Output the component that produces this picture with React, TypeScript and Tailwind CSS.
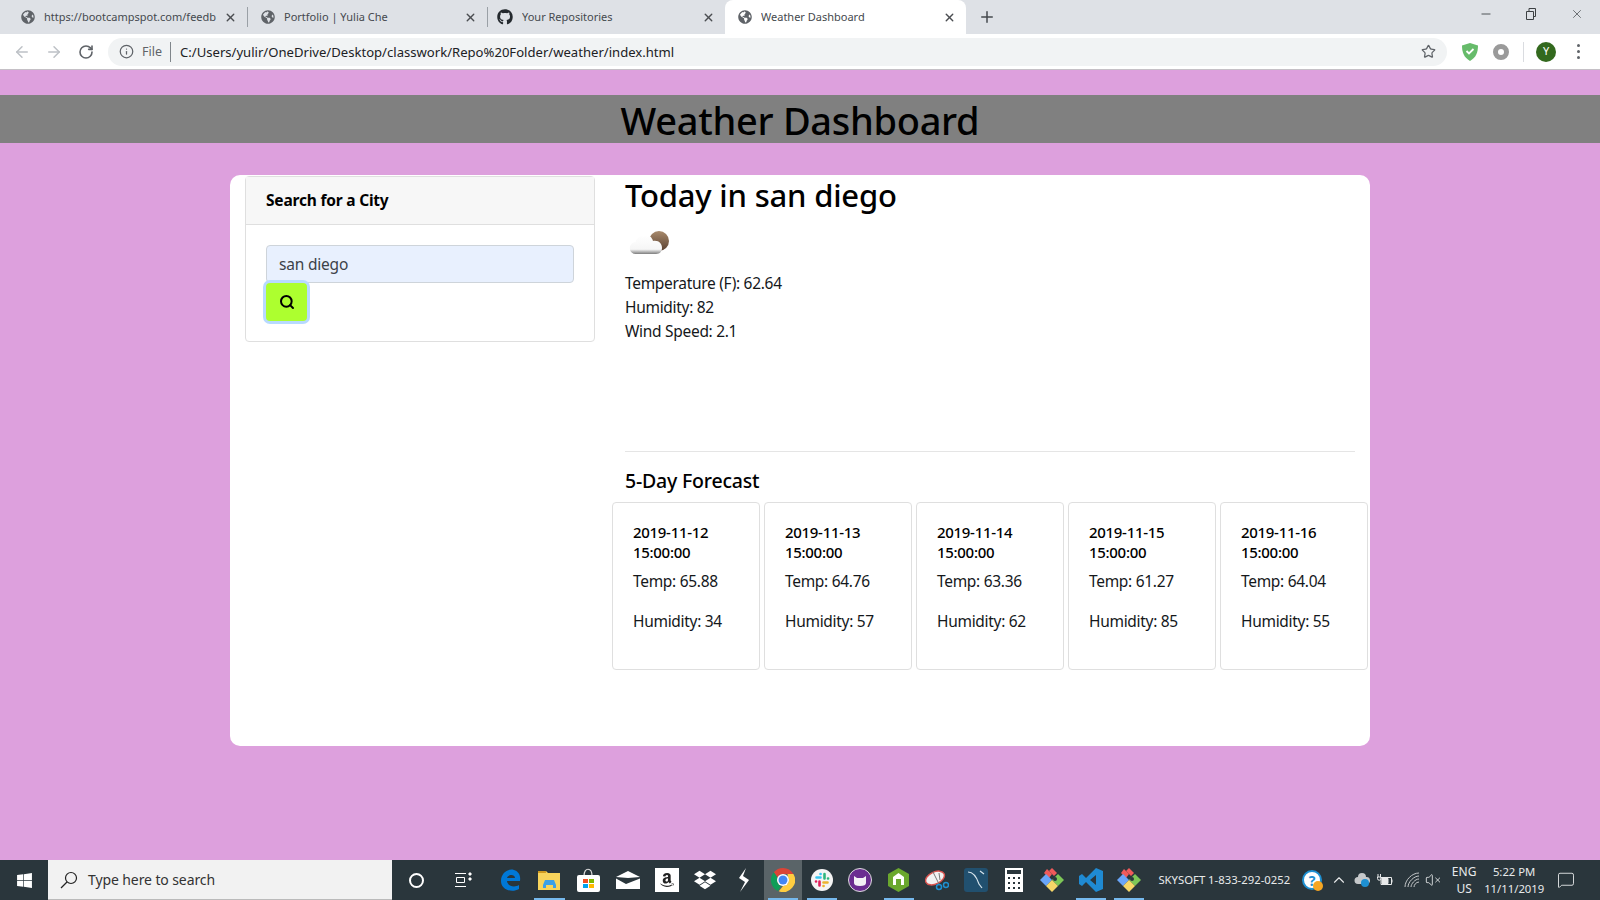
import type { ReactNode } from "react";
import { ArrowLeft, ArrowRight, ChevronUp, Info, MessageSquare, Minus, Plus, RotateCw, Search, Star, VolumeX, X } from "lucide-react";
import { FaAmazon, FaDropbox, FaGithub, FaGlobeAmericas, FaWindows } from "react-icons/fa";

const tabs = [
  { title: "https://bootcampspot.com/feedb", github: false, active: false, width: "w-[239px]", pad: "pl-[13px]" },
  { title: "Portfolio | Yulia Che", github: false, active: false, width: "w-[239px]", pad: "pl-[13px]" },
  { title: "Your Repositories", github: true, active: false, width: "w-[237px]", pad: "pl-[9px]" },
  { title: "Weather Dashboard", github: false, active: true, width: "w-[241px]", pad: "pl-[13px]" },
];

const forecast = [
  { date: "2019-11-12", temp: "65.88", humidity: "34" },
  { date: "2019-11-13", temp: "64.76", humidity: "57" },
  { date: "2019-11-14", temp: "63.36", humidity: "62" },
  { date: "2019-11-15", temp: "61.27", humidity: "85" },
  { date: "2019-11-16", temp: "64.04", humidity: "55" },
];

function Tab({ title, github, active, width, pad }: (typeof tabs)[number]) {
  return (
    <div className={`${width} ${pad} flex h-[34px] shrink-0 items-center pr-[10px] ${active ? "rounded-t-[8px] bg-white" : ""}`}>
      {github ? (
        <FaGithub className="h-[16px] w-[16px] shrink-0 text-[#24292e]" />
      ) : (
        <FaGlobeAmericas className="h-[14px] w-[14px] shrink-0 text-[#5f6368]" />
      )}
      <span className="ml-[9px] flex-1 overflow-hidden text-[11px] whitespace-nowrap text-[#45494e]">{title}</span>
      <X className="ml-[4px] h-[13px] w-[13px] shrink-0 text-[#4a4d51]" strokeWidth={2.5} />
    </div>
  );
}

function BrowserBar() {
  return (
    <div className="shrink-0">
      <div className="flex h-[34px] items-center bg-[#dee1e6] pl-[8px]">
        {tabs.map((tab, index) => (
          <div key={tab.title} className="flex items-center">
            <Tab {...tab} />
            {index < 2 && <div className="h-[20px] w-px bg-[#9aa0a6]" />}
          </div>
        ))}
        <Plus className="ml-[12px] h-[18px] w-[18px] text-[#45494e]" strokeWidth={2} />
        <div className="ml-auto flex items-center pb-[6px] text-[#3c4043]">
          <Minus className="mr-[31px] h-[14px] w-[14px]" strokeWidth={1.5} />
          <svg className="mr-[32px] h-[14px] w-[14px]" viewBox="0 0 14 14" fill="none" stroke="currentColor">
            <path d="M2.500 4.500h7v8h-7zM5 4.500v-3h6.500v8h-2.500" />
          </svg>
          <X className="mr-[16px] h-[14px] w-[14px]" strokeWidth={1.2} />
        </div>
      </div>
      <div className="flex h-[36px] items-center border-b border-[#c5c0c6] bg-white">
        <ArrowLeft className="ml-[13px] h-[18px] w-[18px] text-[#bdc1c6]" strokeWidth={2} />
        <ArrowRight className="ml-[14px] h-[18px] w-[18px] text-[#bdc1c6]" strokeWidth={2} />
        <RotateCw className="ml-[15px] h-[16px] w-[16px] text-[#5f6368]" strokeWidth={2.4} />
        <div className="ml-[14px] flex h-[28px] w-[1339px] items-center rounded-full bg-[#f1f3f4] pl-[11px]">
          <Info className="h-[15px] w-[15px] text-[#5f6368]" strokeWidth={2} />
          <span className="ml-[8px] pt-[2px] text-[12.500px] text-[#5f6368]">File</span>
          <div className="ml-[8px] h-[20px] w-px bg-[#80868b]" />
          <span className="ml-[9px] pt-[2px] text-[13.100px] text-[#202124]">C:/Users/yulir/OneDrive/Desktop/classwork/Repo%20Folder/weather/index.html</span>
          <Star className="mr-[11px] ml-auto h-[15px] w-[15px] text-[#5f6368]" strokeWidth={2} />
        </div>
        <svg className="ml-[14px] h-[20px] w-[18px]" viewBox="0 0 18 20">
          <path d="M9 1l8 2.500c0 7-2 12-8 15.500C3 15.500 1 10.500 1 3.500z" fill="#66bb6a" />
          <path d="M5.500 9l2.500 2.500L12.500 7" fill="none" stroke="#fff" strokeWidth="1.800" />
        </svg>
        <div className="ml-[14px] h-[16px] w-[16px] rounded-full border-[5px] border-[#9a9a9a] bg-white" />
        <div className="ml-[14px] h-[20px] w-px bg-[#dadce0]" />
        <div className="ml-[12px] flex h-[20px] w-[20px] items-center justify-center rounded-full bg-[#33691e] text-[11px] text-white">Y</div>
        <div className="ml-[21px] flex flex-col gap-[3px]">
          <div className="h-[3px] w-[3px] rounded-full bg-[#5f6368]" />
          <div className="h-[3px] w-[3px] rounded-full bg-[#5f6368]" />
          <div className="h-[3px] w-[3px] rounded-full bg-[#5f6368]" />
        </div>
      </div>
    </div>
  );
}

function WeatherIcon() {
  return (
    <svg className="ml-[4px] h-[24px] w-[42px]" viewBox="0 0 42 24">
      <defs>
        <linearGradient id="sun" x1="0" y1="0" x2="0" y2="1">
          <stop offset="0" stopColor="#a88a6c" />
          <stop offset="1" stopColor="#5a4030" />
        </linearGradient>
        <linearGradient id="cloud" x1="0" y1="0" x2="0" y2="1">
          <stop offset="0" stopColor="#ffffff" />
          <stop offset="0.75" stopColor="#f6f6f6" />
          <stop offset="1" stopColor="#7d7d7d" />
        </linearGradient>
      </defs>
      <circle cx="30" cy="10" r="10" fill="url(#sun)" />
      <path d="M7 23a6 6 0 0 1-.5-12C8 6 12 4 16 4c4 0 7 2 8 6 6-1 9 3 9 7 0 3-2 6-6 6z" fill="url(#cloud)" />
    </svg>
  );
}

function ForecastCard({ date, temp, humidity }: (typeof forecast)[number]) {
  return (
    <div className="w-[147.500px] shrink-0 rounded-[4px] border border-[#dfdfdf] p-[20px]">
      <h5 className="mb-[7.400px] text-[15px] leading-[19.500px] font-medium tracking-[-0.3px] text-black">
        {date}
        <br />
        15:00:00
      </h5>
      <p className="mb-[16px] text-[15.500px] leading-[24px] tracking-[-0.3px]">Temp: {temp}</p>
      <p className="mb-[16px] text-[15.500px] leading-[24px] tracking-[-0.3px]">Humidity: {humidity}</p>
    </div>
  );
}

function Dashboard() {
  return (
    <main className="flex-1 pt-[25px]">
      <h1 className="h-[48px] bg-[#808080] text-center text-[38px] leading-[50px] font-medium tracking-[-0.3px] text-black">Weather Dashboard</h1>
      <div className="mx-auto mt-[32px] flex h-[571px] w-[1140px] rounded-[10px] bg-white text-[#15181b]">
        <div className="w-[380px] shrink-0 px-[15px] pt-px">
          <div className="rounded-[4px] border border-[#dfdfdf]">
            <div className="h-[48px] border-b border-[#dfdfdf] bg-[#f7f7f7] px-[20px] py-[11px] text-[15.500px] leading-[24px] font-bold tracking-[-0.2px] text-black">Search for a City</div>
            <div className="p-[20px]">
              <div className="flex h-[38px] items-center rounded-[4px] border border-[#ced4da] bg-[#e8f0fe] px-[12px] pt-px text-[15.500px] tracking-[-0.2px] text-[#3c4248]">san diego</div>
              <button type="button" className="flex h-[38px] w-[41px] items-center justify-center rounded-[4px] bg-[#adff2f] shadow-[0_0_0_3px_#b8daff]">
                <Search className="h-[16px] w-[16px] text-black" strokeWidth={3} />
              </button>
            </div>
          </div>
        </div>
        <div className="w-[760px] shrink-0 px-[15px]">
          <h2 className="mt-px h-[39px] text-[31px] leading-[38px] font-medium tracking-[-0.2px] text-black">Today in san diego</h2>
          <div className="flex h-[56px] items-center">
            <WeatherIcon />
          </div>
          <div className="text-[15.500px] leading-[24px] tracking-[-0.3px]">
            <p>Temperature (F): 62.64</p>
            <p>Humidity: 82</p>
            <p>Wind Speed: 2.1</p>
          </div>
          <hr className="mt-[108px] border-[#e5e5e5]" />
          <h4 className="mt-[17px] h-[24px] text-[19.500px] leading-[24px] font-medium tracking-[-0.2px] text-black">5-Day Forecast</h4>
          <div className="mt-[9px] -ml-[13px] flex gap-[4.500px]">
            {forecast.map((day) => (
              <ForecastCard key={day.date} {...day} />
            ))}
          </div>
        </div>
      </div>
    </main>
  );
}

function TaskIcon({ children, open, active }: { children: ReactNode; open?: boolean; active?: boolean }) {
  return (
    <div className={`relative flex h-[40px] w-[38.400px] shrink-0 items-center justify-center ${active ? "bg-[#5a6468]" : ""}`}>
      {children}
      {open && <div className="absolute right-[4px] bottom-0 left-[4px] h-[2px] bg-[#76b9ed]" />}
    </div>
  );
}

function GitIcon() {
  return (
    <svg className="h-[24px] w-[24px]" viewBox="0 0 24 24">
      <path d="M7 1l5 5-3 4-5-5z" fill="#f05a5a" />
      <path d="M12 0l5 5-3 3-5-5z" fill="#f05a5a" />
      <path d="M6 6l6 6-6 6-6-6z" fill="#6aa5f8" />
      <path d="M18 6l6 6-6 6-6-6z" fill="#7dc657" />
      <path d="M12 12l6 6-6 6-6-6z" fill="#f7d768" />
      <circle cx="15" cy="11" r="2" fill="#2a363c" />
    </svg>
  );
}

function Taskbar() {
  return (
    <footer className="flex h-[40px] shrink-0 items-center bg-[#2a363c] text-[#e8eaeb]">
      <div className="flex w-[48px] items-center justify-center">
        <FaWindows className="h-[17px] w-[17px] text-white" />
      </div>
      <div className="flex h-[40px] w-[344px] items-center border-b border-[#bbb] bg-[#f2f2f2] pl-[12px] text-[14px] tracking-[-0.1px] text-[#333]">
        <svg className="h-[18px] w-[18px]" viewBox="0 0 18 18" fill="none" stroke="#222" strokeWidth="1.200">
          <circle cx="11" cy="7" r="5.500" />
          <path d="M7 11l-6 6" />
        </svg>
        <span className="ml-[10px]">Type here to search</span>
      </div>
      <div className="ml-[5px] flex items-center">
        <TaskIcon>
          <div className="h-[15px] w-[15px] rounded-full border-2 border-white" />
        </TaskIcon>
        <div className="w-[9px]" />
        <TaskIcon>
          <svg className="h-[16px] w-[17px]" viewBox="0 0 17 16" fill="none" stroke="#fff">
            <path d="M0 1.500h11M0 14.500h11M1.500 5.500h8v5h-8z" />
            <path d="M14 1h2v2h-2zM14 6h2v2h-2z" fill="#fff" />
          </svg>
        </TaskIcon>
        <div className="w-[9px]" />
        <TaskIcon>
          <svg className="h-[22px] w-[21px]" viewBox="0 0 21 22">
            <path d="M20 12H7c.5 5 7 7 12 4v4C12 24 1 21 1 12 1 4 8-1 14 1c4 1 7 5 6 11zM7 9h8c0-4-7-4-8 0z" fill="#0078d7" fillRule="evenodd" />
          </svg>
        </TaskIcon>
        <TaskIcon open>
          <svg className="h-[20px] w-[22px]" viewBox="0 0 22 20">
            <path d="M0 1h8l2 2h12v17H0z" fill="#f8d45c" />
            <path d="M0 1h8v2H0z" fill="#d09a20" />
            <path d="M5 15l2-5h9l2 5v3h-3v-3H8v3H5z" fill="#3ba0e8" />
          </svg>
        </TaskIcon>
        <div className="w-px" />
        <TaskIcon>
          <svg className="h-[24px] w-[23px]" viewBox="0 0 23 24">
            <path d="M7 8c0-9 8-9 8 0" fill="none" stroke="#ddd" strokeWidth="1.200" />
            <rect y="7" width="23" height="17" rx="2" fill="#fff" />
            <path d="M6 11h5v4H6z" fill="#f25022" />
            <path d="M12 11h5v4h-5z" fill="#7fba00" />
            <path d="M6 16h5v4H6z" fill="#00a4ef" />
            <path d="M12 16h5v4h-5z" fill="#ffb900" />
          </svg>
        </TaskIcon>
        <div className="w-px" />
        <TaskIcon>
          <svg className="h-[18px] w-[24px]" viewBox="0 0 24 18">
            <path d="M0 6l12-6 12 6L12 7z" fill="#fff" />
            <path d="M0 7.500L10 13 24 7.500V18H0z" fill="#fff" />
          </svg>
        </TaskIcon>
        <TaskIcon>
          <div className="flex h-[24px] w-[24px] items-center justify-center bg-white">
            <FaAmazon className="h-[16px] w-[16px] text-[#222]" />
          </div>
        </TaskIcon>
        <TaskIcon>
          <FaDropbox className="h-[22px] w-[22px] text-white" />
        </TaskIcon>
        <TaskIcon>
          <svg className="h-[24px] w-[14px]" viewBox="0 0 14 24">
            <path d="M10 0L3 10l6 4-5 10 9-12-6-4z" fill="#fff" />
          </svg>
        </TaskIcon>
        <div className="w-px" />
        <TaskIcon active open>
          <svg className="h-[24px] w-[24px]" viewBox="0 0 24 24">
            <path d="M12 0a12 12 0 0 1 10.400 6H12a6 6 0 0 0-5.500 3.500L2.800 4.300A12 12 0 0 1 12 0z" fill="#db4437" />
            <path d="M2.800 4.300l3.700 5.200A6 6 0 0 0 10 17.700L7 23A12 12 0 0 1 2.800 4.300z" fill="#0f9d58" />
            <path d="M22.400 6A12 12 0 0 1 7.800 23.300L12 18a6 6 0 0 0 5-9l-.5-3z" fill="#ffcd40" />
            <circle cx="12" cy="12" r="6" fill="#fff" />
            <circle cx="12" cy="12" r="4.500" fill="#4285f4" />
          </svg>
        </TaskIcon>
        <div className="w-px" />
        <TaskIcon open>
          <svg className="h-[22px] w-[22px]" viewBox="0 0 22 22" fill="none" strokeWidth="2.600" strokeLinecap="round">
            <circle cx="11" cy="11" r="11" fill="#f4f4f4" />
            <path d="M5.500 8.500H9.500M9.500 5H9.600" stroke="#36c5f0" />
            <path d="M13.500 5V9.500M17 9.500H17.100" stroke="#2eb67d" />
            <path d="M12.500 13.500H16.500M12.500 17H12.600" stroke="#ecb22e" />
            <path d="M8.500 12.500V16.500M5 12.500H5.100" stroke="#e01e5a" />
          </svg>
        </TaskIcon>
        <TaskIcon>
          <svg className="h-[24px] w-[24px]" viewBox="0 0 24 24">
            <circle cx="12" cy="12" r="11.500" fill="#6b2d91" stroke="#ddd" />
            <path d="M6 8l3 2h6l3-2v7c0 2-2 3-6 3s-6-1-6-3z" fill="#f4f1f6" />
          </svg>
        </TaskIcon>
        <TaskIcon open>
          <svg className="h-[24px] w-[21px]" viewBox="0 0 21 24">
            <path d="M10.500 0L21 6v12l-10.500 6L0 18V6z" fill="#6aa82e" />
            <path d="M10.500 5L16 9v8h-3v-6h-5v6H5V9z" fill="#fff" />
          </svg>
        </TaskIcon>
        <TaskIcon>
          <svg className="h-[22px] w-[24px]" viewBox="0 0 24 22">
            <ellipse cx="10" cy="9" rx="10" ry="6" fill="#f2f2f2" stroke="#d9534f" strokeWidth="1.500" transform="rotate(-25 10 9)" />
            <path d="M8 3l6 12M14 4l1 7" stroke="#777" fill="none" />
            <circle cx="14" cy="18" r="2.500" fill="none" stroke="#1e90d2" strokeWidth="1.500" />
            <circle cx="21" cy="16" r="2.500" fill="none" stroke="#1e90d2" strokeWidth="1.500" />
          </svg>
        </TaskIcon>
        <TaskIcon>
          <svg className="h-[24px] w-[24px]" viewBox="0 0 24 24">
            <rect width="24" height="24" rx="3" fill="#21506f" />
            <path d="M4 4c6 0 9 6 11 12l3 4M16 3l4 3" fill="none" stroke="#d6e4ec" strokeWidth="1.200" />
          </svg>
        </TaskIcon>
        <TaskIcon>
          <svg className="h-[24px] w-[18px]" viewBox="0 0 18 24">
            <rect width="18" height="24" fill="#fff" />
            <rect x="2" y="2" width="14" height="4" fill="#2a363c" />
            <path d="M3 9h2v2H3zM8 9h2v2H8zM13 9h2v2h-2zM3 14h2v2H3zM8 14h2v2H8zM13 14h2v2h-2zM3 19h2v2H3zM8 19h2v2H8zM13 19h2v2h-2z" fill="#2a363c" />
          </svg>
        </TaskIcon>
        <TaskIcon>
          <GitIcon />
        </TaskIcon>
        <TaskIcon open>
          <svg className="h-[24px] w-[24px]" viewBox="0 0 24 24">
            <path d="M17 0l7 3v18l-7 3L7 14l-4 4-3-2V8l3-2 4 4zM17 7l-6 5 6 5z" fill="#1f8ad2" fillRule="evenodd" />
          </svg>
        </TaskIcon>
        <TaskIcon open>
          <GitIcon />
        </TaskIcon>
      </div>
      <span className="ml-[10px] text-[11.300px] whitespace-nowrap">SKYSOFT 1-833-292-0252</span>
      <div className="relative ml-[12px] flex h-[20px] w-[20px] items-center justify-center rounded-full border-2 border-[#1e90d2] bg-white text-[14px] font-bold text-[#1e90d2]">
        ?
        <div className="absolute -right-[3px] -bottom-[3px] h-[10px] w-[10px] rounded-full bg-[#f5a623]" />
      </div>
      <ChevronUp className="ml-[8px] h-[18px] w-[18px] text-[#e8eaeb]" strokeWidth={1.5} />
      <svg className="ml-[6px] h-[16px] w-[16px]" viewBox="0 0 16 16">
        <path d="M4 12a3 3 0 0 1 0-7 4 4 0 0 1 8 0 3 3 0 0 1 1 7z" fill="#c5c8ca" />
        <circle cx="11" cy="11" r="4" fill="#1e90d2" />
      </svg>
      <svg className="ml-[7px] h-[14px] w-[16px]" viewBox="0 0 16 14" fill="none" stroke="#e8eaeb">
        <path d="M4 4.500h10.500v7H4zM15 6.500v3M1 1v3M3.500 1v3M0.500 4h3.500v1.500a1.500 1.500 0 0 1-3.500 0z" />
        <path d="M5 5.500h6v5H5z" fill="#e8eaeb" />
      </svg>
      <svg className="ml-[11px] h-[16px] w-[16px]" viewBox="0 0 16 16" fill="none" stroke="#c5c8ca">
        <path d="M1 15C1 8 8 1 15 1M4 15c0-5 6-11 11-11M7 15c0-3 4-8 8-8M10 15c0-2 2-5 5-5" />
      </svg>
      <VolumeX className="ml-[5px] h-[16px] w-[16px] text-[#e8eaeb]" strokeWidth={1.3} />
      <div className="ml-[8px] w-[30px] text-center text-[12px] leading-[17px]">
        <div>ENG</div>
        <div>US</div>
      </div>
      <div className="ml-[5px] w-[60px] text-center text-[11.300px] leading-[17px] whitespace-nowrap">
        <div>5:22 PM</div>
        <div>11/11/2019</div>
      </div>
      <MessageSquare className="ml-[13px] h-[18px] w-[18px] text-[#e8eaeb]" strokeWidth={1.2} />
    </footer>
  );
}

export default function App() {
  return (
    <div className="flex h-[900px] w-[1600px] flex-col overflow-hidden bg-[#dda0dd] font-['Noto_Sans','Open_Sans',sans-serif]">
      <BrowserBar />
      <Dashboard />
      <Taskbar />
    </div>
  );
}
